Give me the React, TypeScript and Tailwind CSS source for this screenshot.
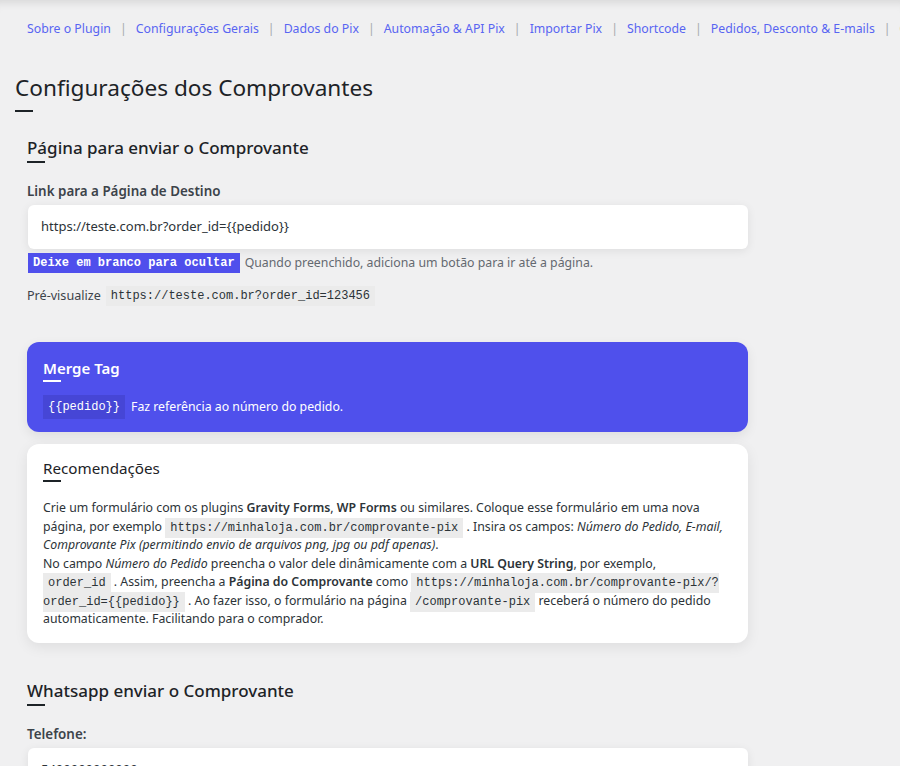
import React from "react";

const mono = { fontFamily: '"Liberation Mono", "DejaVu Sans Mono", monospace' };

function Heading({ children, size = "h2" }: { children: React.ReactNode; size?: "h1" | "h2" | "card" | "cardWhite" }) {
  if (size === "h1") {
    return (
      <div>
        <h1 className="text-[22.6px] leading-[32px] font-normal text-[#1d2327]">{children}</h1>
        <div className="mt-[6px] h-[2px] w-[18px] bg-[#1d2327]" />
      </div>
    );
  }
  if (size === "h2") {
    return (
      <div>
        <h2 className="text-[17px] leading-[24px] font-medium text-[#1d2327]">{children}</h2>
        <div className="mt-[1px] h-[2px] w-[18px] bg-[#1d2327]" />
      </div>
    );
  }
  const white = size === "cardWhite";
  return (
    <div>
      <h3 className={`leading-[22px] ${white ? "text-[15px] font-semibold text-white" : "text-[15.2px] font-normal text-[#1d2327]"}`}>
        {children}
      </h3>
      <div className={`mt-[1px] h-[2px] w-[18px] ${white ? "bg-white" : "bg-[#1d2327]"}`} />
    </div>
  );
}

function Code({ children, className = "" }: { children: React.ReactNode; className?: string }) {
  return (
    <code style={mono} className={`px-[5px] py-[3px] text-[12px] leading-[14px] bg-[#ebebeb] text-[#2c3338] ${className}`}>
      {children}
    </code>
  );
}

export default function App() {
  const nav = [
    "Sobre o Plugin",
    "Configurações Gerais",
    "Dados do Pix",
    "Automação & API Pix",
    "Importar Pix",
    "Shortcode",
    "Pedidos, Desconto & E-mails",
  ];
  return (
    <div
      className="min-h-[766px] w-[900px] overflow-hidden bg-[#f0f0f1] text-[12.3px] text-[#3c434a]"
      style={{ fontFamily: '"Noto Sans", "Open Sans", sans-serif', boxShadow: "inset 0 10px 10px -8px rgba(0,0,0,0.12)" }}
    >
      <nav className="flex items-center whitespace-nowrap pl-[27px] pt-[19px] text-[12.3px] leading-[20px]">
        {nav.map((n) => (
          <React.Fragment key={n}>
            <span className="text-[#5865f2]">{n}</span>
            <span className="px-[9px] text-[#a7aaad]">|</span>
          </React.Fragment>
        ))}
        <span className="font-semibold text-[#1d2327]">Comprovantes</span>
      </nav>

      <div className="pl-[15px] pt-[33px]">
        <Heading size="h1">Configurações dos Comprovantes</Heading>
      </div>

      <div className="w-[748px] pl-[27px]">
        <div className="pt-[24px]">
          <Heading>Página para enviar o Comprovante</Heading>
        </div>

        <label className="mt-[19px] block text-[13.4px] font-semibold leading-[18px] text-[#3c434a]">
          Link para a Página de Destino
        </label>
        <div className="mt-[5px] ml-[1px] flex h-[44px] w-[720px] items-center rounded-[6px] bg-white px-[13px] text-[13px] text-[#2c3338] shadow-[0_2px_10px_rgba(0,0,0,0.08)]">
          https://teste.com.br?order_id={"{{pedido}}"}
        </div>
        <div className="mt-[4px] ml-[1px] flex items-center">
          <span style={mono} className="bg-[#4f4fec] px-[5px] py-[1px] text-[12px] font-bold leading-[18px] text-white">
            Deixe em branco para ocultar
          </span>
          <span className="ml-[5px] text-[#646970]">Quando preenchido, adiciona um botão para ir até a página.</span>
        </div>
        <div className="mt-[13px] flex items-center">
          <span className="text-[12.6px] text-[#3c434a]">Pré-visualize</span>
          <Code className="ml-[5px]">https://teste.com.br?order_id=123456</Code>
        </div>

        <div className="mt-[36px] rounded-[12px] bg-[#4f50ec] px-[16px] pt-[15px] pb-[13px] shadow-[0_4px_12px_rgba(0,0,0,0.08)]">
          <Heading size="cardWhite">Merge Tag</Heading>
          <div className="mt-[13px] flex items-center">
            <code style={mono} className="bg-[#4646d6] px-[5px] py-[3px] text-[12px] text-white">
              {"{{pedido}}"}
            </code>
            <span className="ml-[6px] text-white">Faz referência ao número do pedido.</span>
          </div>
        </div>

        <div className="mt-[12px] rounded-[12px] bg-white pl-[16px] pr-[22px] pt-[13px] pb-[14px] shadow-[0_4px_14px_rgba(0,0,0,0.08)]">
          <Heading size="card">Recomendações</Heading>
          <p className="mt-[17px] text-[12.3px] leading-[18.5px] text-[#2c3338]">
            Crie um formulário com os plugins <b className="font-semibold">Gravity Forms</b>,{" "}
            <b className="font-semibold">WP Forms</b> ou similares. Coloque esse formulário em uma nova página, por exemplo{" "}
            <Code>https://minhaloja.com.br/comprovante-pix</Code> . Insira os campos:{" "}
            <i>Número do Pedido, E-mail, Comprovante Pix (permitindo envio de arquivos png, jpg ou pdf apenas)</i>.
            <br />
            No campo <i>Número do Pedido</i> preencha o valor dele dinâmicamente com a{" "}
            <b className="font-semibold">URL Query String</b>, por exemplo, <Code>order_id</Code> . Assim, preencha a{" "}
            <b className="font-semibold">Página do Comprovante</b> como{" "}
            <Code>
              https://minhaloja.com.br/comprovante-pix/?<wbr />order_id={"{{pedido}}"}
            </Code>{" "}
            . Ao fazer isso, o formulário na página <Code>/comprovante-pix</Code> receberá o número do pedido
            automaticamente. Facilitando para o comprador.
          </p>
        </div>

        <div className="pt-[36px]">
          <Heading>Whatsapp enviar o Comprovante</Heading>
        </div>
        <label className="mt-[19px] block text-[13.4px] font-semibold leading-[18px] text-[#3c434a]">Telefone:</label>
        <div className="mt-[5px] ml-[1px] flex h-[44px] w-[720px] items-center rounded-[6px] bg-white px-[13px] text-[13px] text-[#2c3338] shadow-[0_2px_10px_rgba(0,0,0,0.08)]">
          5499999999999
        </div>
      </div>
    </div>
  );
}
